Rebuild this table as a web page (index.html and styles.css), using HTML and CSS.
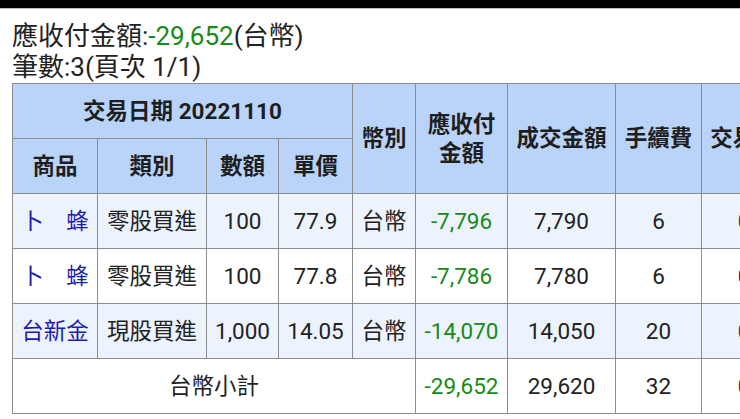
FILE: index.html
```html
<!DOCTYPE html>
<html lang="zh-Hant">
<head>
<meta charset="utf-8">
<title>對帳單</title>
<link rel="stylesheet" href="styles.css">
</head>
<body>
<div class="topbar"></div>
<main class="content">
  <div class="summary">
    <div class="line">應收付金額:<span class="neg">-29,652</span>(台幣)</div>
    <div class="line">筆數:3(頁次 1/1)</div>
  </div>
  <table class="grid">
    <colgroup>
      <col class="c1"><col class="c2"><col class="c3"><col class="c4"><col class="c5"><col class="c6"><col class="c7"><col class="c8"><col class="c9">
    </colgroup>
    <thead>
      <tr>
        <th colspan="4">交易日期 20221110</th>
        <th rowspan="2">幣別</th>
        <th rowspan="2">應收付<br>金額</th>
        <th rowspan="2">成交金額</th>
        <th rowspan="2">手續費</th>
        <th rowspan="2">交易稅</th>
      </tr>
      <tr>
        <th>商品</th>
        <th>類別</th>
        <th>數額</th>
        <th>單價</th>
      </tr>
    </thead>
    <tbody>
      <tr class="alt">
        <td class="link">卜　蜂</td>
        <td>零股買進</td>
        <td>100</td>
        <td>77.9</td>
        <td>台幣</td>
        <td class="neg">-7,796</td>
        <td>7,790</td>
        <td>6</td>
        <td>0</td>
      </tr>
      <tr>
        <td class="link">卜　蜂</td>
        <td>零股買進</td>
        <td>100</td>
        <td>77.8</td>
        <td>台幣</td>
        <td class="neg">-7,786</td>
        <td>7,780</td>
        <td>6</td>
        <td>0</td>
      </tr>
      <tr class="alt">
        <td class="link">台新金</td>
        <td>現股買進</td>
        <td>1,000</td>
        <td>14.05</td>
        <td>台幣</td>
        <td class="neg">-14,070</td>
        <td>14,050</td>
        <td>20</td>
        <td>0</td>
      </tr>
      <tr>
        <td colspan="5">台幣小計</td>
        <td class="neg">-29,652</td>
        <td>29,620</td>
        <td>32</td>
        <td>0</td>
      </tr>
    </tbody>
  </table>
</main>
</body>
</html>
```
FILE: styles.css
```css
html, body {
  margin: 0;
  padding: 0;
  background: #ffffff;
  overflow: hidden;
}
body {
  width: 740px;
  height: 419px;
  font-family: Roboto, "Noto Sans CJK TC", sans-serif;
  color: #222222;
}
.topbar {
  height: 8px;
  background: #000000;
  border-bottom: 1px solid #bdbdbd;
}
.content {
  padding: 12px 0 0 12px;
}
.summary .line {
  font-size: 26px;
  line-height: 31px;
  white-space: nowrap;
}
.neg {
  color: #178a17;
}
.grid {
  border-collapse: collapse;
  table-layout: fixed;
  width: 774px;
  border: 1px solid #8c8c8c;
  font-size: 22.5px;
}
.c1 { width: 85px; }
.c2 { width: 109px; }
.c3 { width: 72px; }
.c4 { width: 74px; }
.c5 { width: 63px; }
.c6 { width: 92px; }
.c7 { width: 108px; }
.c8 { width: 86px; }
.c9 { width: 85px; }
.grid th,
.grid td {
  border: 1px solid #8c8c8c;
  height: 54px;
  padding: 0;
  text-align: center;
  vertical-align: middle;
  white-space: nowrap;
  overflow: hidden;
}
.grid th {
  background: #b9d4f8;
  font-weight: bold;
  line-height: 29px;
  color: #1e1e1e;
}
.grid td {
  line-height: 28px;
}
.grid tr.alt td {
  background: #edf3fd;
}
.grid td.link {
  color: #1c1cb0;
}
.grid td.neg {
  color: #178a17;
}
```
